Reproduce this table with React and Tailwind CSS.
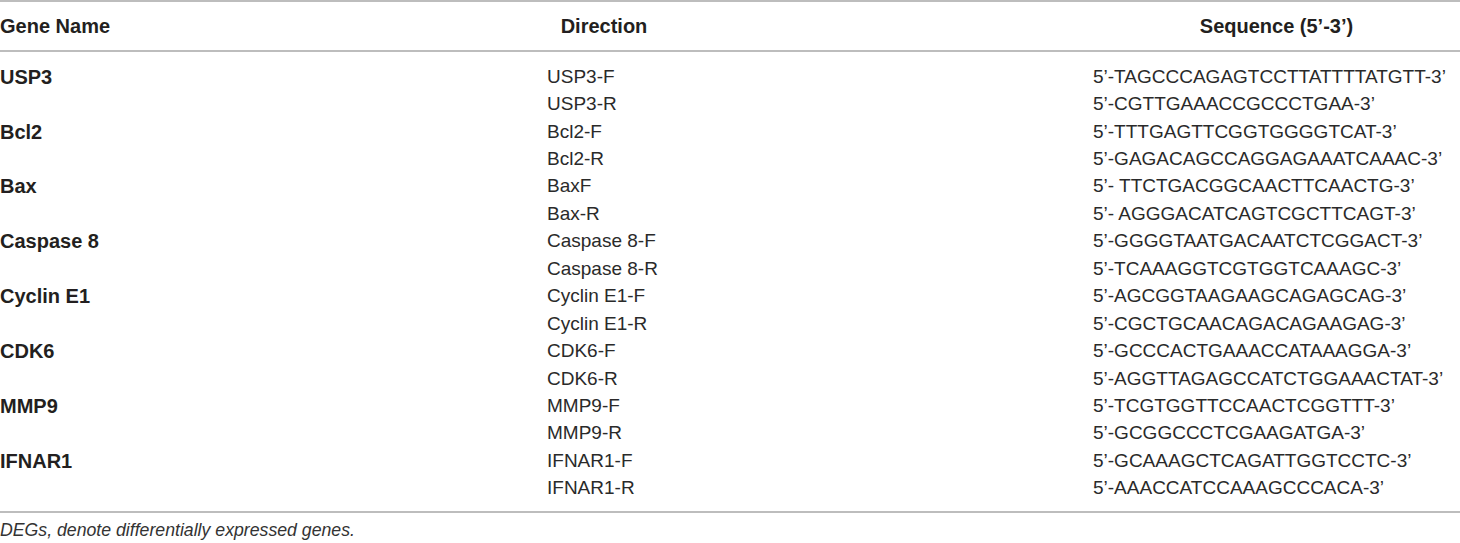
import React from "react";

const groups = [
  ["USP3", "USP3-F", "5’-TAGCCCAGAGTCCTTATTTTATGTT-3’", "USP3-R", "5’-CGTTGAAACCGCCCTGAA-3’"],
  ["Bcl2", "Bcl2-F", "5’-TTTGAGTTCGGTGGGGTCAT-3’", "Bcl2-R", "5’-GAGACAGCCAGGAGAAATCAAAC-3’"],
  ["Bax", "BaxF", "5’- TTCTGACGGCAACTTCAACTG-3’", "Bax-R", "5’- AGGGACATCAGTCGCTTCAGT-3’"],
  ["Caspase 8", "Caspase 8-F", "5’-GGGGTAATGACAATCTCGGACT-3’", "Caspase 8-R", "5’-TCAAAGGTCGTGGTCAAAGC-3’"],
  ["Cyclin E1", "Cyclin E1-F", "5’-AGCGGTAAGAAGCAGAGCAG-3’", "Cyclin E1-R", "5’-CGCTGCAACAGACAGAAGAG-3’"],
  ["CDK6", "CDK6-F", "5’-GCCCACTGAAACCATAAAGGA-3’", "CDK6-R", "5’-AGGTTAGAGCCATCTGGAAACTAT-3’"],
  ["MMP9", "MMP9-F", "5’-TCGTGGTTCCAACTCGGTTT-3’", "MMP9-R", "5’-GCGGCCCTCGAAGATGA-3’"],
  ["IFNAR1", "IFNAR1-F", "5’-GCAAAGCTCAGATTGGTCCTC-3’", "IFNAR1-R", "5’-AAACCATCCAAAGCCCACA-3’"],
];

export default function App() {
  const rows = [];
  groups.forEach(([g, f, sf, r, sr]) => {
    rows.push([g, f, sf]);
    rows.push(["", r, sr]);
  });
  return (
    <div
      className="w-[1460px] h-[543px] bg-white overflow-hidden text-[#231f20]"
      style={{ fontFamily: '"Liberation Sans", Arial, sans-serif' }}
    >
      <div className="border-t-2 border-b-2 border-[#bdbdbd] h-[52px] grid grid-cols-[547px_114px_1fr] items-center font-bold text-[20px] leading-[24px]">
        <div className="-mt-[1px]">Gene Name</div>
        <div className="text-center whitespace-nowrap -mt-[1px]">Direction</div>
        <div className="ml-[432px] text-center whitespace-nowrap -mt-[1px]">Sequence (5’-3’)</div>
      </div>
      <div className="pt-[11px] pb-[9px] border-b-2 border-[#bdbdbd]">
        {rows.map(([g, d, s], i) => (
          <div
            key={i}
            className="grid grid-cols-[547px_114px_1fr] items-center h-[27.45px]"
          >
            <div className="font-bold text-[20px] leading-[24px]">{g}</div>
            <div className="text-[19px] leading-[24px] whitespace-nowrap text-[#2a2a2a]">{d}</div>
            <div className="ml-[432px] text-[19px] leading-[24px] whitespace-nowrap text-[#2a2a2a]">{s}</div>
          </div>
        ))}
      </div>
      <div className="italic text-[17.7px] leading-[22px] pt-[6px] text-[#333]">
        DEGs, denote differentially expressed genes.
      </div>
    </div>
  );
}
